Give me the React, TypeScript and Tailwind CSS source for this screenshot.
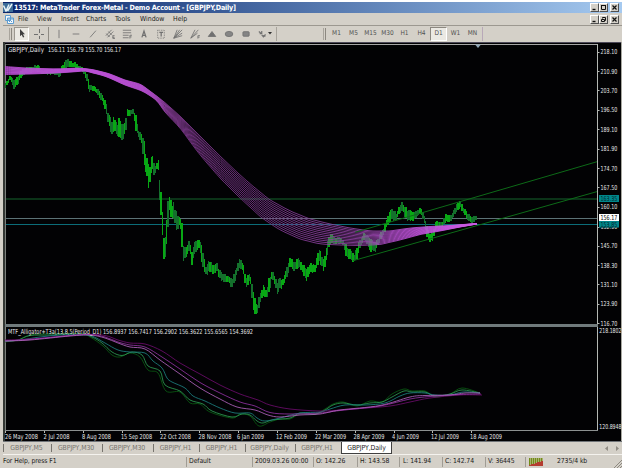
import type { ReactNode } from "react";

type Pt = [number, number];

// [x, high, low] anchors of the daily price bars
const PRICE: [number, number, number][] = [
  [5, 84, 90], [10, 75, 80], [14, 80, 90], [18, 75, 85], [22, 67, 77], [27, 67, 73], [38, 64, 72], [43, 70, 75],
  [57, 68, 75], [59, 70, 79], [62, 64, 73], [67, 58, 68], [72, 61, 67], [77, 63, 70], [83, 67, 73], [87, 72, 83],
  [89, 82, 94], [92, 84, 91], [97, 87, 95], [103, 95, 103], [106, 102, 113], [108, 112, 123], [112, 118, 137],
  [114, 113, 133], [117, 125, 137], [119, 117, 137], [123, 125, 142], [126, 115, 132], [127, 109, 117],
  [133, 109, 115], [136, 112, 133], [138, 128, 137], [142, 133, 145], [144, 140, 168], [147, 155, 180],
  [149, 167, 192], [151, 157, 177], [152.5, 150, 173], [155, 165, 177], [158, 157, 167], [160, 180, 210],
  [162.5, 207, 237], [163.7, 230, 263], [165, 235, 260], [167, 207, 247], [169, 194, 213], [172, 203, 220],
  [174, 200, 223], [177, 212, 233], [180, 215, 223], [182, 223, 247], [183, 243, 265], [185, 245, 260],
  [188, 242, 255], [190, 240, 250], [191.5, 252, 267], [195, 238, 253], [199, 240, 248], [202, 243, 265],
  [204, 258, 272], [206.5, 265, 279], [209, 259, 271], [213, 263, 275], [217, 262, 272], [219, 268, 280],
  [223, 273, 282], [228, 275, 283], [232, 278, 288], [235, 270, 282], [237, 263, 277], [239, 257, 268],
  [243, 262, 272], [246, 277, 290], [248, 275, 287], [250, 272, 278], [252, 283, 300], [254, 295, 315],
  [257, 305, 317], [259, 295, 308], [263, 285, 297], [267, 288, 300], [269, 277, 293], [272, 268, 280],
  [274, 272, 283], [277, 280, 295], [280, 277, 290], [283, 277, 287], [287, 267, 278], [290, 257, 268],
  [295, 260, 272], [299, 257, 268], [302, 262, 273], [306, 268, 283], [310, 262, 273], [315, 263, 273],
  [319, 248, 262], [324, 258, 273], [328, 238, 253], [331, 230, 243], [335, 237, 245], [342, 237, 243],
  [346, 243, 258], [349, 247, 260], [354, 254, 263], [357, 245, 260], [360, 238, 247], [365, 232, 240],
  [370, 238, 252], [375, 242, 253], [380, 233, 242], [384, 227, 235], [387, 218, 227], [391, 207, 222],
  [396, 212, 220], [402, 201, 211], [407, 208, 222], [412, 210, 223], [416, 210, 218], [421, 207, 215],
  [425, 217, 227], [427, 223, 238], [429, 232, 243], [433, 230, 242], [436, 220, 230], [442, 222, 228],
  [445, 213, 223], [450, 215, 223], [453, 210, 218], [457, 202, 212], [460, 199, 208], [463, 205, 213],
  [467, 212, 220], [472, 215, 225], [477, 216, 220],
];

const RIBBON_TOP: Pt[] = [
  [5, 66.5], [25, 68], [57, 69], [80, 68], [95, 70], [110, 74], [125, 80], [140, 84], [150, 91], [162, 100],
  [180, 116], [200, 136], [220, 156], [240, 175], [255, 188], [270, 200], [290, 211], [310, 219], [330, 224],
  [350, 228], [370, 231], [390, 231], [410, 228], [430, 226.5], [450, 225.5], [477, 223.5],
];
const RIBBON_BOTTOM: Pt[] = [
  [5, 74.5], [30, 74], [57, 73], [85, 71], [105, 76], [125, 85], [145, 92], [158, 102], [165, 112], [180, 128],
  [200, 155], [220, 178], [240, 198], [262, 218], [280, 230], [300, 239], [320, 244], [340, 245], [360, 245.5],
  [380, 244.5], [400, 240], [420, 234.5], [440, 231], [460, 227], [477, 224],
];

function at(points: number[][], x: number, k: number) {
  let i = 0;
  while (i < points.length - 2 && points[i + 1][0] < x) i++;
  const a = points[i];
  const b = points[i + 1];
  const t = Math.min(1, Math.max(0, (x - a[0]) / (b[0] - a[0])));
  return a[k] + (b[k] - a[k]) * t;
}

function noise(i: number) {
  const v = Math.sin(i * 127.1 + 3.7) * 43758.5453;
  return v - Math.floor(v);
}

const BARS = Array.from({ length: 337 }, (_, i) => {
  const x = 5.6 + i * 1.4;
  const hi = at(PRICE, x, 1);
  const lo = at(PRICE, x, 2);
  const span = lo - hi;
  return { x, hi: hi + span * 0.26 * noise(i), lo: lo - span * 0.2 * noise(i + 500), bright: noise(i + 900) > 0.45 };
});

function smooth(p: Pt[]) {
  let d = `M${p[0][0]} ${p[0][1]}`;
  for (let i = 0; i < p.length - 1; i++) {
    const a = p[Math.max(0, i - 1)];
    const b = p[i];
    const c = p[i + 1];
    const e = p[Math.min(p.length - 1, i + 2)];
    d += `C${b[0] + (c[0] - a[0]) / 6} ${b[1] + (c[1] - a[1]) / 6} ${c[0] - (e[0] - b[0]) / 6} ${c[1] - (e[1] - b[1]) / 6} ${c[0]} ${c[1]}`;
  }
  return d;
}

const RIBBON = Array.from({ length: 13 }, (_, n) => {
  const t = n / 12;
  const pts: Pt[] = [];
  for (let x = 5; x <= 477; x += 8) {
    const a = at(RIBBON_TOP, x, 1);
    const b = at(RIBBON_BOTTOM, x, 1);
    pts.push([x, a + (b - a) * t]);
  }
  return smooth(pts);
});

const INDICATOR: { color: string; pts: Pt[] }[] = [
  { color: "#0a5a12", pts: [[5, 342], [18, 340], [27, 336], [40, 334], [80, 333.5], [90, 337], [103, 346], [112, 355], [120, 357], [130, 353], [140, 357], [148, 370], [158, 373], [166, 391], [180, 392], [190, 403], [200, 404], [210, 412], [232, 418], [240, 414], [250, 416], [259, 426], [270, 422], [280, 419], [290, 419], [300, 414], [315, 414], [325, 409], [333, 404], [343, 402], [357, 406], [370, 401], [382, 402], [392, 394], [404, 389], [412, 391], [425, 391], [435, 397], [450, 394], [462, 388], [480, 393]] },
  { color: "#2c9a52", pts: [[5, 341.5], [18, 340], [30, 335.5], [50, 335], [80, 334], [92, 337], [102, 343], [112, 352], [122, 355.5], [132, 352], [142, 355], [148, 366], [160, 371], [165, 385], [180, 391], [190, 400], [203, 404], [212, 411], [232, 417], [242, 414], [250, 415], [257, 421], [263, 423], [272, 420], [290, 418], [300, 413], [315, 414], [325, 410], [333, 405], [343, 403], [357, 405], [370, 403], [382, 402], [392, 397], [404, 391], [412, 392], [425, 392], [435, 396], [450, 394], [462, 390], [480, 393]] },
  { color: "#1c8080", pts: [[5, 341], [20, 340], [40, 337], [60, 335], [80, 335], [92, 336], [105, 343], [118, 350], [130, 352], [145, 353], [153, 361], [162, 368], [167, 378], [172, 382], [185, 388], [193, 396], [205, 401], [220, 408], [235, 413], [250, 413], [257, 418], [265, 421], [280, 418], [300, 413], [320, 412], [330, 409], [345, 405], [365, 405], [385, 403], [400, 396], [410, 393], [425, 393], [435, 395], [450, 395], [463, 392], [480, 393]] },
  { color: "#6c0c6c", pts: [[5, 340], [30, 339], [85, 334.5], [105, 335.5], [118, 340], [130, 343], [145, 344], [162, 351], [180, 363], [200, 374], [220, 385], [240, 394], [258, 400], [270, 405], [290, 409], [320, 411], [340, 410], [360, 408.5], [390, 406], [410, 402], [430, 398], [460, 395], [482, 395]] },
  { color: "#9030a0", pts: [[5, 341], [30, 339.5], [70, 335.5], [90, 334.5], [105, 337], [118, 342], [130, 345], [145, 347], [162, 357], [180, 369], [200, 382.5], [220, 393], [240, 402], [255, 406], [270, 412.5], [290, 414], [320, 413], [340, 410.5], [380, 406], [410, 399], [430, 396.5], [460, 394.5], [481, 394]] },
  { color: "#b062bc", pts: [[5, 341], [30, 340], [70, 336], [90, 335], [105, 338], [118, 343], [130, 347], [145, 349], [160, 360], [180, 374], [200, 388], [220, 399], [237, 407], [255, 410], [268, 415], [280, 417], [300, 415], [320, 414], [340, 410], [380, 405.5], [410, 397], [425, 395.5], [450, 395], [465, 393], [480, 393]] },
];

const PRICES: [string, number][] = [
  ["218.10", 52], ["210.90", 71.3], ["203.70", 90.7], ["196.50", 110], ["189.10", 129.5], ["181.90", 149],
  ["174.70", 168.3], ["167.50", 187.7], ["160.10", 207], ["152.90", 227], ["145.70", 246], ["138.30", 265.2],
  ["131.10", 284.7], ["123.90", 304], ["116.70", 323.3],
];

const DATES: [string, number, number][] = [
  ["26 May 2008", 5, 33], ["2 Jul 2008", 43.5, 26], ["8 Aug 2008", 82, 29], ["15 Sep 2008", 121, 31],
  ["22 Oct 2008", 160, 31], ["28 Nov 2008", 198.5, 33], ["6 Jan 2009", 237, 27], ["12 Feb 2009", 276, 31],
  ["22 Mar 2009", 315, 31], ["28 Apr 2009", 353.5, 31], ["4 Jun 2009", 392, 27], ["12 Jul 2009", 431, 28],
  ["18 Aug 2009", 470, 32],
];

function Label({ x, y, w, children, fill = "#e4e4e4" }: { x: number; y: number; w: number; children: string; fill?: string }) {
  return (
    <text x={x} y={y + 2.4} textLength={w} lengthAdjust="spacingAndGlyphs" fontSize={6.8} fill={fill}>
      {children}
    </text>
  );
}

function Chart() {
  return (
    <svg width={619} height={399} viewBox="3 42 619 399" className="block shrink-0">
      <defs>
        <linearGradient id="ribbon" gradientUnits="userSpaceOnUse" x1="5" x2="477" y1="0" y2="0">
          <stop offset="0" stopColor="#bb50d6" />
          <stop offset="0.29" stopColor="#bb50d6" />
          <stop offset="0.36" stopColor="#80398f" />
          <stop offset="0.5" stopColor="#783488" />
          <stop offset="0.75" stopColor="#9444a8" />
          <stop offset="0.84" stopColor="#bb50d6" />
          <stop offset="1" stopColor="#c95be2" />
        </linearGradient>
      </defs>
      <rect x="3" y="42" width="619" height="399" fill="#020204" />
      <g shapeRendering="crispEdges">
        <rect x="3" y="42" width="619" height="1" fill="#4c4858" />
        <rect x="3" y="42" width="2" height="399" fill="#343834" />
        <rect x="5" y="44" width="593" height="1" fill="#a6a6a6" />
        <rect x="5" y="44" width="1" height="387" fill="#7c807c" />
        <rect x="597" y="44" width="1" height="387" fill="#b4b8b4" />
        <rect x="621" y="42" width="1" height="399" fill="#a8a8a0" />
        <rect x="5" y="430" width="593" height="1" fill="#8c9090" />
        <rect x="6" y="198" width="591" height="2" fill="#0b3318" />
        <rect x="6" y="218" width="591" height="1" fill="#5c7276" />
        <rect x="6" y="224" width="591" height="1" fill="#0b6c78" />
      </g>

      <g shapeRendering="crispEdges">
        {BARS.map((b, i) => (
          <rect key={i} x={b.x - 0.7} y={b.hi} width={1.4} height={Math.max(1.5, b.lo - b.hi)} fill={b.bright ? "#08a814" : "#14702c"} />
        ))}
      </g>
      {RIBBON.map((d, i) => (
        <path key={i} d={d} fill="none" stroke="url(#ribbon)" strokeWidth={0.85} />
      ))}
      <path d="M353 260.7L597 191.6M355 232.3L597 161.7" stroke="#0d6a18" strokeWidth={1} fill="none" />
      <path d="M475 44.5h6l-3 3.5z" fill="#8fa6b8" />

      <rect x="5" y="324" width="593" height="3" fill="#707a7c" />
      {INDICATOR.map((l) => (
        <path key={l.color} d={smooth(l.pts)} fill="none" stroke={l.color} strokeWidth={0.85} />
      ))}

      <g fontFamily="'DejaVu Sans Condensed','DejaVu Sans',sans-serif">
        <Label x={8} y={49.4} w={36}>GBPJPY,Daily</Label>
        <Label x={48} y={49.4} w={73}>156.11 156.79 155.70 156.17</Label>
        <Label x={8} y={332} w={245}>MTF_Alligator+T3a(13,8,5(Period_D1) 156.8937 156.7417 156.2902 156.3622 155.6565 154.3692</Label>
        {PRICES.map(([p, y]) => (
          <g key={p}>
            <rect x="598" y={Math.floor(y)} width="1.5" height="1" fill="#b4b8b4" />
            <Label x={600.5} y={y} w={16.8}>{p}</Label>
          </g>
        ))}
        <rect x="599" y="195" width="20" height="7" fill="#00868b" />
        <Label x={600.5} y={198.6} w={16.8} fill="#03282c">163.35</Label>
        <rect x="599" y="221" width="20" height="6.5" fill="#00868b" />
        <Label x={600.5} y={224.2} w={16.8} fill="#03282c">153.85</Label>
        <rect x="599" y="214" width="20" height="7" fill="#ffffff" />
        <Label x={600.5} y={217.6} w={16.8} fill="#000000">156.17</Label>
        <Label x={599.3} y={330.3} w={22.2}>218.1802</Label>
        <Label x={599.3} y={427} w={22.2}>120.8948</Label>
        {DATES.map(([t, x, w], i) => (
          <g key={t}>
            <rect x={Math.round(5 + i * 38.85)} y="431" width="1" height="2" fill="#b4b8b4" />
            <Label x={x} y={436.6} w={w}>{t}</Label>
          </g>
        ))}
      </g>
    </svg>
  );
}

function WinButton({ children }: { children: ReactNode }) {
  return (
    <span className="flex h-[9px] w-[9px] items-center justify-center border border-t-white border-l-white border-r-[#505050] border-b-[#505050] bg-[#d4d0c8]">
      <svg width="7" height="7" viewBox="0 0 7 7" fill="none" stroke="#101010" strokeWidth="1" className="shrink-0">
        {children}
      </svg>
    </span>
  );
}

function WinButtons({ restore }: { restore?: boolean }) {
  return (
    <div className="ml-auto flex items-center">
      <WinButton><path d="M1.5 5.5h3" strokeWidth="1.4" /></WinButton>
      <WinButton>
        {restore ? <path d="M2.5 2.5v-1h3v3h-1M1.5 3.5h3v2h-3z" /> : <path d="M1 1.5h5M1.5 1v4.5h4V1" />}
      </WinButton>
      <span className="w-[2px]" />
      <WinButton><path d="M1.5 1.5l4 4M5.5 1.5l-4 4" strokeWidth="1.2" /></WinButton>
    </div>
  );
}

const MENU: [string, string][] = [
  ["File", "w-[19px]"], ["View", "w-[24px]"], ["Insert", "w-[25px]"], ["Charts", "w-[29px]"],
  ["Tools", "w-[25px]"], ["Window", "w-[33px]"], ["Help", "w-[20px]"],
];

const fan = "M1 11L11 1M1 11L5 1M1 11L8 1M1 11L11 5M1 11L11 8";

const TOOLS: ReactNode[] = [
  <path d="M6 1v10" />,
  <path d="M2 6h8" />,
  <path d="M2.5 10L9.5 2" />,
  <path d="M1 8l7-7M3 10l7-7M1.5 5.5l4 4M4 3l4 4M9 8h2.5M9 10h2.5M9.5 8v3.5H12" />,
  <path d="M1 1.5h10M1 4.5h10M1 7.5h7M1 10.5h7M9.5 11.5V7.5H12M9.5 9.5h2" />,
  <path d="M3.5 10L6 2.5L8.5 10M4.5 7.5h3" strokeWidth="1.5" />,
  <g><rect x="2" y="1.5" width="8" height="9.5" strokeDasharray="1 1" /><path d="M4 4h4.500M6.200 4v5" strokeWidth="1.500" /></g>,
  <path d={fan} />,
  <path d="M1 11L10 1M1 11L6 1M1 11l8-6M9.500 11.500V8H12M9.500 9.800h2" />,
  <path d="M6 3l4.500 6h-9z" fill="#707070" />,
  <ellipse cx="6" cy="6" rx="4.600" ry="3.100" fill="#858585" />,
  <rect x="2.300" y="3.200" width="7.500" height="5.500" rx="1" fill="#858585" />,
  <path d="M1 3l3 2.500M2 5.500h2.500V2.500M4.500 7l2 2.500L9 6.500M6 8l3 .5" strokeWidth="1.400" />,
];

const FRAMES = ["M1", "M5", "M15", "M30", "H1", "H4", "D1", "W1", "MN"];

function Grip() {
  return <span className="h-[12px] w-[3px] border-r border-l border-l-[#a8a49c] border-r-[#8c8880]" />;
}

function Toolbar() {
  return (
    <div className="flex h-[16px] items-center border-t border-t-[#9c9890] pl-[6px]">
      <Grip />
      <span className="ml-[2px] flex h-[14px] w-[15px] items-center justify-center border border-t-[#9c9890] border-l-[#9c9890] border-r-white border-b-white bg-[#ebe9e3]">
        <svg width="8" height="9" viewBox="0 0 8 9"><path d="M2 0v7.200l1.700-1.500L5 8.500l1.300-.6L5 5.200h2z" fill="#404040" /></svg>
      </span>
      <span className="flex w-[19px] justify-center">
        <svg width="10" height="10" viewBox="0 0 10 10" stroke="#707070"><path d="M5.500 0v4M5.500 7v3M0 5.500h4M7 5.500h3" /></svg>
      </span>
      <span className="h-[14px] w-px bg-[#908c84]" />
      <div className="ml-[1px] flex">
        {TOOLS.map((t, i) => (
          <span key={i} className="flex w-[17px] justify-center">
            <svg width="10" height="10" viewBox="0 0 12 12" fill="none" stroke="#707070">{t}</svg>
          </span>
        ))}
      </div>
      <svg width="5" height="3" viewBox="0 0 5 3" className="-ml-[3px]"><path d="M0 0h4L2 2.500z" fill="#303030" /></svg>
      <span className="ml-[3px] h-[14px] w-px bg-[#a8a49c]" />
      <span className="w-[46px]" />
      <Grip />
      <div className="ml-[2px] flex text-[6.500px] text-[#505050]">
        {FRAMES.map((f) => (
          <span
            key={f}
            className={
              f === "D1"
                ? "flex h-[14px] w-[17px] items-center justify-center border border-t-[#8c8880] border-l-[#8c8880] border-r-white border-b-white bg-[#ebe9e3]"
                : "flex h-[14px] w-[17px] items-center justify-center"
            }
          >
            {f}
          </span>
        ))}
      </div>
      <span className="ml-[1px] h-[14px] w-px bg-[#b8a8b8]" />
    </div>
  );
}

const TABS: [string, string][] = [
  ["GBPJPY,M5", "w-[48px]"], ["GBPJPY,M30", "w-[51px]"], ["GBPJPY,M30", "w-[51px]"], ["GBPJPY,H1", "w-[46px]"],
  ["GBPJPY,H1", "w-[46px]"], ["GBPJPY,Daily", "w-[50px]"], ["GBPJPY,H1", "w-[45px]"],
];

function Tabs() {
  return (
    <div className="flex h-[13px] items-center border-t border-t-[#707478] text-[6.900px] tracking-[-0.1px] text-[#77746e]">
      {TABS.map(([t, w], i) => (
        <span key={i} className={`flex h-[8px] items-center justify-center border-l border-l-[#77746e] pr-[2px] ${w}`}>
          {t}
        </span>
      ))}
      <span className="ml-[1px] flex h-[12px] w-[51px] items-center justify-center self-start border border-t-0 border-[#404040] bg-white pt-[1px] text-[#202020]">
        GBPJPY,Daily
      </span>
      <svg width="14" height="5" viewBox="0 0 14 5" className="mr-[3px] ml-auto" fill="#908c84">
        <path d="M3 0v5L0 2.500zM11 0v5l3-2.500z" />
      </svg>
    </div>
  );
}

const STATUS: [string, string][] = [
  ["For Help, press F1", "w-[183px]"], ["Default", "w-[66px]"], ["2009.03.26 00:00", "w-[61px]"],
  ["O: 142.26", "w-[44px]"], ["H: 143.58", "w-[42px] pl-[1px]"], ["L: 141.94", "w-[43px] pl-[3px]"],
  ["C: 142.74", "w-[43px]"], ["V: 36445", "w-[40px]"],
];

function StatusBar() {
  return (
    <div className="flex h-[14px] items-center border-t border-t-[#f4f2ee] text-[6.800px] tracking-[-0.08px] text-[#202020]">
      {STATUS.map(([t, w], i) => (
        <span key={t} className={`flex h-[10px] items-center ${i === 0 ? "" : "border-l border-l-[#a09c94] pl-[2px]"} ${w}`}>
          {t}
        </span>
      ))}
      <span className="flex h-[10px] w-[32px] items-center border-l border-l-[#a09c94] pl-[3px]">
        <svg width="15" height="8" viewBox="0 0 15 8" shapeRendering="crispEdges">
          {[0, 2, 4, 6, 8, 10, 12].map((x, i) => (
            <g key={x}>
              <rect x={x} y="0" width="1" height="8" fill="#728c18" />
              <rect x={x + 1} y="0" width="1" height="8" fill="#a8b070" />
              <rect x={x} y={7 - i * 0.7} width="2" height={1 + i * 0.7} fill="#b43c30" />
            </g>
          ))}
        </svg>
      </span>
      <span>2735/4 kb</span>
      <svg width="8" height="8" viewBox="0 0 8 8" className="ml-auto self-end" stroke="#8c8880">
        <path d="M0 8L8 0M3 8l5-5M6 8l2-2" />
      </svg>
    </div>
  );
}

export default function App() {
  return (
    <div className="h-[470px] w-[625px] overflow-hidden bg-white pt-[2px] font-['DejaVu_Sans_Condensed','DejaVu_Sans',sans-serif] leading-none whitespace-nowrap">
      <div className="flex h-[466px] w-[622px] flex-col bg-[#d4d0c8] pl-[3px]">
        <div className="flex h-[11px] items-center bg-linear-to-r from-[#0a246a] to-[#a6caf0] pr-[3px] text-[7.200px] font-bold tracking-[-0.2px] text-white">
          <svg width="10" height="9" viewBox="0 0 10 9" className="mr-[1px]">
            <rect width="10" height="9" fill="#3c6c98" />
            <path d="M.5 2.500L3 8L6 1.500M4.500 8L9 1" stroke="#e8f4f8" strokeWidth="1.500" fill="none" />
          </svg>
          <span>13517: MetaTrader Forex-Metal - Demo Account - [GBPJPY,Daily]</span>
          <WinButtons />
        </div>
        <div className="flex h-[12px] items-center pr-[3px] text-[6.900px] text-[#202020]">
          <svg width="9" height="9" viewBox="0 0 9 9" className="mr-[4px] ml-[2px]" fill="#f4f8fc" stroke="#5c9cd0">
            <path d="M.5.5h5v5h-5zM2.500 3h6v5.500h-6zM2.500 4h6M4 7l1.500-1.500L7 7" />
          </svg>
          {MENU.map(([t, w]) => (
            <span key={t} className={w}>{t}</span>
          ))}
          <WinButtons restore />
        </div>
        <Toolbar />
        <span className="h-[1px]" />
        <Chart />
        <Tabs />
        <StatusBar />
      </div>
    </div>
  );
}
